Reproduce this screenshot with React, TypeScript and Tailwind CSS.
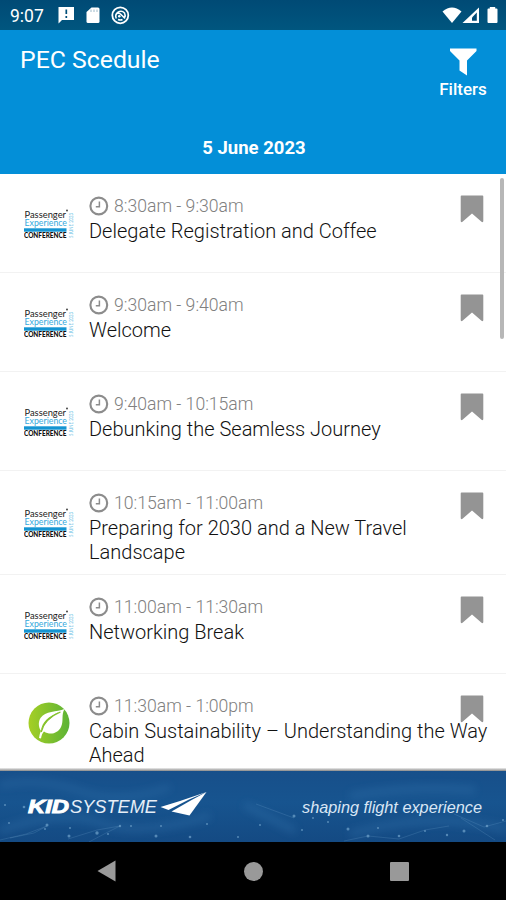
import type { ReactNode } from "react";

type Session = {
  time: string;
  title: ReactNode;
  height: string;
  leaf?: boolean;
};

const sessions: Session[] = [
  { time: "8:30am - 9:30am", title: "Delegate Registration and Coffee", height: "h-[99px]" },
  { time: "9:30am - 9:40am", title: "Welcome", height: "h-[99px]" },
  { time: "9:40am - 10:15am", title: "Debunking the Seamless Journey", height: "h-[99px]" },
  { time: "10:15am - 11:00am", title: <>Preparing for 2030 and a New Travel<br />Landscape</>, height: "h-[104px]" },
  { time: "11:00am - 11:30am", title: "Networking Break", height: "h-[99px]" },
  { time: "11:30am - 1:00pm", title: <>Cabin Sustainability – Understanding the Way<br />Ahead</>, height: "h-[97px]", leaf: true },
];

function ConferenceLogo() {
  return (
    <svg width="52" height="34" viewBox="0 0 52 34" className="block" fontFamily="Lato, 'Liberation Sans', sans-serif">
      <text x="0.500" y="11" fontSize="9" textLength="41.500" lengthAdjust="spacingAndGlyphs" fill="#222">Passenger</text>
      <circle cx="43" cy="3.500" r="0.900" fill="#333" />
      <text x="0.500" y="19.300" fontSize="8.500" textLength="42.500" lengthAdjust="spacingAndGlyphs" fill="#35a9dc">Experience</text>
      <rect x="0" y="21.300" width="42.500" height="3.400" fill="#1595d2" />
      <text x="0" y="31.300" fontSize="6.500" fontWeight="900" textLength="42.500" lengthAdjust="spacingAndGlyphs" fill="#111">CONFERENCE</text>
      <text transform="translate(49 31) rotate(-90)" fontSize="5" textLength="25" lengthAdjust="spacingAndGlyphs" fill="#5ebbe3">5 JUNE 2023</text>
    </svg>
  );
}

function LeafLogo() {
  return (
    <svg width="42" height="42" viewBox="0 0 42 42" className="block">
      <defs>
        <linearGradient id="leaf" x1="0" y1="0" x2="1" y2="0">
          <stop offset="0" stopColor="#a5cf25" />
          <stop offset="1" stopColor="#5cb336" />
        </linearGradient>
      </defs>
      <circle cx="21" cy="21" r="20.500" fill="url(#leaf)" />
      <path d="M36.500 7C29 10 17 9 12.500 16C9.500 21 11 26 13 29C14 20 20 14.500 32 9.500C20 17 12.500 25 11 36L13 36.500C13.500 33 14.500 31 16 29.500C22 33.500 30 31.500 33 25C36 19 33 13 36.500 7Z" fill="#fff" />
      <path d="M13.200 30C15.500 21 21.500 14.500 32.500 10" fill="none" stroke="#86c22c" strokeWidth="1.300" />
    </svg>
  );
}

function Clock() {
  return (
    <svg width="20" height="20" viewBox="0 0 20 20" className="block shrink-0">
      <circle cx="9.800" cy="10" r="8.400" fill="none" stroke="#8c8c8c" strokeWidth="2.100" />
      <path d="M10.400 5.500V10.800H6.800" fill="none" stroke="#8c8c8c" strokeWidth="1.500" />
    </svg>
  );
}

function Bookmark() {
  return (
    <svg width="24" height="28" viewBox="0 0 24 28" className="block">
      <path d="M1.500 0.500H22.500Q23.300 0.500 23.300 1.500V26Q23.300 27.800 21.500 26.800L12 18.500L2.500 26.800Q0.700 27.800 0.700 26V1.500Q0.700 0.500 1.500 0.500Z" fill="#949494" />
    </svg>
  );
}

function SessionRow({ session }: { session: Session }) {
  return (
    <li className={`relative flex shrink-0 border-b border-[#f2f2f2] ${session.height}`}>
      <div className="flex w-[89px] shrink-0 items-center pt-px pl-6">
        {session.leaf ? <div className="pt-px pl-1"><LeafLogo /></div> : <ConferenceLogo />}
      </div>
      <div className="min-w-0 flex-1 pt-5">
        <div className="flex h-[23px] items-center gap-[5px]">
          <Clock />
          <span className="text-[17.600px] leading-[22px] font-light whitespace-nowrap text-[#808080]">{session.time}</span>
        </div>
        <h2 className="mt-[3px] text-[20px] leading-[23.500px] font-light whitespace-nowrap text-[#111]">{session.title}</h2>
      </div>
      <button aria-label="Bookmark" className="absolute top-[21px] right-[22px]"><Bookmark /></button>
    </li>
  );
}

function StatusBar() {
  return (
    <div className="flex h-[30px] shrink-0 items-center bg-linear-to-b from-[#004a75] to-[#00567f] text-white">
      <span className="w-[58px] pt-px pl-[10px] text-[17.500px] leading-[30px]">9:07</span>
      <svg width="74" height="20" viewBox="0 0 74 20">
        <path d="M1 2H16V15H4L0.500 18.500V2Z" fill="#fff" />
        <path d="M8.300 4.500V9M8.300 11V13" stroke="#004f79" strokeWidth="1.700" />
        <path d="M33.500 2.500H40Q41.500 2.500 41.500 4V16.500Q41.500 18 40 18H30Q28.500 18 28.500 16.500V7Z" fill="#fff" />
        <path d="M33 4.500V7M36 4.500V7M39 4.500V7" stroke="#9dbaca" strokeWidth="1" />
        <circle cx="62.300" cy="10.300" r="8" fill="none" stroke="#fff" strokeWidth="1.800" />
        <path d="M58.300 13.500A5 5 0 0 1 66.500 8Q67.800 10.500 66.500 12.500M58.500 8.500Q61.500 7.500 63.500 10L67 13.500M60 14.500Q62.500 15.500 64.500 14.500" fill="none" stroke="#fff" strokeWidth="1.600" />
        <circle cx="61.300" cy="11.300" r="1.300" fill="#fff" />
      </svg>
      <svg width="60" height="20" viewBox="0 0 60 20" className="mr-[4px] ml-auto">
        <path d="M0.500 6.500Q10 -1.500 19.500 6.500L10 18Z" fill="#fff" />
        <path d="M37 2.500V18H20.500Z" fill="#fff" />
        <path d="M34.800 7.500V15.800H30V12.500Z" fill="#004a75" />
        <path d="M47.800 3.500V2H53.200V3.500H54.500Q55.500 3.500 55.500 4.500V17Q55.500 18 54.500 18H46.500Q45.500 18 45.500 17V4.500Q45.500 3.500 46.500 3.500Z" fill="#fff" />
      </svg>
    </div>
  );
}

function Banner() {
  return (
    <svg width="506" height="71" viewBox="0 2 506 71" className="block shrink-0" fontFamily="'Liberation Sans', Arial, sans-serif">
      <defs>
        <linearGradient id="sea" x1="0" y1="0" x2="0" y2="1">
          <stop offset="0" stopColor="#174f8a" />
          <stop offset="0.450" stopColor="#17548f" />
          <stop offset="1" stopColor="#144a83" />
        </linearGradient>
        <filter id="soft" x="-20%" y="-100%" width="140%" height="300%"><feGaussianBlur stdDeviation="4" /></filter>
      </defs>
      <rect width="506" height="73" fill="url(#sea)" />
      <g filter="url(#soft)" stroke="#3878b0" fill="none" opacity="0.400">
        <path d="M0 16Q40 8 80 22T170 18" strokeWidth="5" />
        <path d="M245 36L295 62M350 27Q410 16 475 21" strokeWidth="6" />
        <path d="M0 62Q60 40 100 54T210 47M350 65Q430 42 506 60" strokeWidth="6" />
      </g>
      <g fill="none" stroke="#7baed6" strokeWidth="0.800" opacity="0.250">
        <path d="M0 71L26 65L47 57L34 64L10 69M68 70L97 61L120 57L106 64L89 73M256 35L294 49M344 72L368 67L399 70L425 61L449 57M454 45L484 58L506 52M461 49L495 71" />
      </g>
      <g fill="#78aad1" opacity="0.650">
        <circle cx="5" cy="36" r="1" /><circle cx="24" cy="38" r="1.300" /><circle cx="9" cy="54" r="1" /><circle cx="47" cy="56" r="1.500" />
        <circle cx="45" cy="60" r="1" /><circle cx="69" cy="67" r="1.500" /><circle cx="70" cy="59" r="1" /><circle cx="97" cy="64" r="1.700" />
        <circle cx="108" cy="65" r="1" /><circle cx="120" cy="57" r="1.200" /><circle cx="131" cy="57" r="1" /><circle cx="161" cy="57" r="1" />
        <circle cx="156" cy="67" r="1.500" /><circle cx="190" cy="68" r="1.300" /><circle cx="207" cy="55" r="1" /><circle cx="238" cy="68" r="1" />
        <circle cx="260" cy="56" r="1" /><circle cx="294" cy="47" r="1.500" /><circle cx="302" cy="61" r="1" /><circle cx="313" cy="49" r="1" />
        <circle cx="328" cy="53" r="1" /><circle cx="348" cy="60" r="1.500" /><circle cx="368" cy="67" r="1.500" /><circle cx="378" cy="59" r="1" />
        <circle cx="399" cy="67" r="1.300" /><circle cx="425" cy="62" r="1" /><circle cx="447" cy="66" r="1.200" /><circle cx="464" cy="62" r="1.500" />
        <circle cx="487" cy="57" r="1.300" /><circle cx="503" cy="51" r="1" />
      </g>
      <text x="28" y="43.500" fontSize="17.500" fontWeight="bold" fontStyle="italic" textLength="41" lengthAdjust="spacingAndGlyphs" fill="#fff" stroke="#fff" strokeWidth="0.900">KID</text>
      <text x="70" y="43.500" fontSize="17.500" fontStyle="italic" textLength="87" lengthAdjust="spacingAndGlyphs" fill="#e6eef7">SYSTEME</text>
      <path d="M206.500 23L180 32L160.500 38L168.500 41L189 30.500Z" fill="#fff" />
      <path d="M206.500 23L192.500 30.500L171.500 42.500L189.500 46.500Z" fill="#fff" />
      <text x="302" y="43.500" fontSize="17" fontStyle="italic" textLength="180" lengthAdjust="spacingAndGlyphs" fill="#d9e6f5">shaping flight experience</text>
    </svg>
  );
}

export default function App() {
  return (
    <div className="flex h-[900px] w-[506px] flex-col overflow-hidden bg-white font-['Roboto',sans-serif]">
      <StatusBar />
      <header className="flex h-[144px] shrink-0 flex-col bg-[#038fd8] text-white">
        <div className="flex h-[90px] items-start justify-between pr-[18px] pl-5">
          <h1 className="pt-[15px] text-[24.800px] leading-[30px] whitespace-nowrap">PEC Scedule</h1>
          <button className="flex w-[50px] flex-col items-center pt-[18px]">
            <svg width="28" height="28" viewBox="0 0 28 28" className="block">
              <path d="M1 0.500H27.500V3L18 12.500V27.500L10.500 22.500V12.500L1 3Z" fill="#fff" />
            </svg>
            <span className="mt-[3px] text-[17px] leading-5 font-medium whitespace-nowrap">Filters</span>
          </button>
        </div>
        <p className="pt-4 pl-[2px] text-center text-[18.500px] leading-6 font-bold">5 June 2023</p>
      </header>
      <main className="relative h-[597px] shrink-0 overflow-hidden">
        <ul className="flex flex-col">
          {sessions.map((session) => <SessionRow key={session.time} session={session} />)}
        </ul>
        <div className="absolute top-1 right-[2px] h-[161px] w-[4px] rounded-sm bg-[#b7b7b7]" />
        <div className="absolute inset-x-0 bottom-0 h-[3px] bg-linear-to-b from-[#eee] to-[#888]" />
      </main>
      <Banner />
      <nav className="h-[58px] shrink-0 bg-black">
        <div className="grid h-full grid-cols-3 items-center">
          <button aria-label="Back" className="flex justify-end pr-[53px]">
            <svg width="19" height="22" viewBox="0 0 19 22"><path d="M18.500 0.500V21.500L0.500 11Z" fill="#999" /></svg>
          </button>
          <button aria-label="Home" className="flex justify-center pl-[2px]"><span className="size-[19px] rounded-full bg-[#999]" /></button>
          <button aria-label="Recents" className="flex pl-[53px]"><span className="size-[19px] rounded-[1px] bg-[#999]" /></button>
        </div>
      </nav>
    </div>
  );
}
